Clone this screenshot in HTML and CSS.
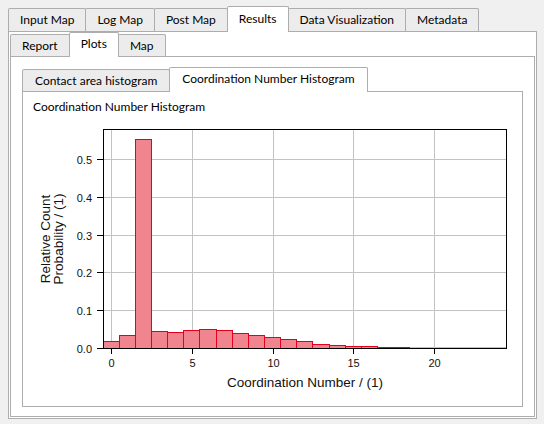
FILE: index.html
```html
<!DOCTYPE html>
<html lang="en">
<head>
  <meta charset="UTF-8">
  <title>Results - Plots</title>
  <link rel="stylesheet" href="styles.css">
</head>
<body>

<div class="tabwidget main">
  <div class="tabbar">
    <div class="tab">Input Map</div>
    <div class="tab">Log Map</div>
    <div class="tab">Post Map</div>
    <div class="tab active">Results</div>
    <div class="tab">Data Visualization</div>
    <div class="tab">Metadata</div>
  </div>
  <div class="pane outer">

    <div class="tabwidget sub">
      <div class="tabbar">
        <div class="tab">Report</div>
        <div class="tab active">Plots</div>
        <div class="tab">Map</div>
      </div>
      <div class="pane middle">

        <div class="tabwidget plots">
          <div class="tabbar">
            <div class="tab">Contact area histogram</div>
            <div class="tab active">Coordination Number Histogram</div>
          </div>
          <div class="pane inner">
            <div class="plot-title">Coordination Number Histogram</div>
            <svg class="chart" width="500" height="286" viewBox="0 0 500 286">
              <!-- grid -->
              <g class="grid">
                <line x1="88.5" y1="13" x2="88.5" y2="231"/>
                <line x1="169.5" y1="13" x2="169.5" y2="231"/>
                <line x1="250.5" y1="13" x2="250.5" y2="231"/>
                <line x1="330.5" y1="13" x2="330.5" y2="231"/>
                <line x1="411.5" y1="13" x2="411.5" y2="231"/>
                <line x1="80" y1="193.5" x2="484" y2="193.5"/>
                <line x1="80" y1="155.5" x2="484" y2="155.5"/>
                <line x1="80" y1="118.5" x2="484" y2="118.5"/>
                <line x1="80" y1="80.5" x2="484" y2="80.5"/>
                <line x1="80" y1="42.5" x2="484" y2="42.5"/>
              </g>
              <!-- bars -->
              <g class="bars">
                <rect x="80.5" y="224.5" width="16" height="7"/>
                <rect x="96.5" y="218.5" width="16" height="13"/>
                <rect x="112.5" y="22.5" width="16" height="209"/>
                <rect x="128.5" y="214.5" width="16" height="17"/>
                <rect x="144.5" y="215.5" width="16" height="16"/>
                <rect x="160.5" y="213.5" width="16" height="18"/>
                <rect x="176.5" y="212.5" width="17" height="19"/>
                <rect x="193.5" y="213.5" width="16" height="18"/>
                <rect x="209.5" y="216.5" width="16" height="15"/>
                <rect x="225.5" y="218.5" width="16" height="13"/>
                <rect x="241.5" y="220.5" width="16" height="11"/>
                <rect x="257.5" y="222.5" width="16" height="9"/>
                <rect x="273.5" y="224.5" width="16" height="7"/>
                <rect x="289.5" y="227.5" width="17" height="4"/>
                <rect x="306.5" y="228.5" width="16" height="3"/>
                <rect x="322.5" y="229.5" width="16" height="2"/>
                <rect x="338.5" y="229.5" width="16" height="2"/>
                <rect x="354.5" y="230.5" width="16" height="1"/>
                <rect x="370.5" y="230.5" width="16" height="1"/>
              </g>
              <line class="tail" x1="387" y1="230.5" x2="484" y2="230.5"/>
              <!-- axes -->
              <rect class="frame" x="80.5" y="12.5" width="403" height="219"/>
              <g class="ticks">
                <line x1="74" y1="231.5" x2="80" y2="231.5"/>
                <line x1="74" y1="193.5" x2="80" y2="193.5"/>
                <line x1="74" y1="155.5" x2="80" y2="155.5"/>
                <line x1="74" y1="118.5" x2="80" y2="118.5"/>
                <line x1="74" y1="80.5" x2="80" y2="80.5"/>
                <line x1="74" y1="42.5" x2="80" y2="42.5"/>
                <line x1="88.5" y1="232" x2="88.5" y2="237"/>
                <line x1="169.5" y1="232" x2="169.5" y2="237"/>
                <line x1="250.5" y1="232" x2="250.5" y2="237"/>
                <line x1="330.5" y1="232" x2="330.5" y2="237"/>
                <line x1="411.5" y1="232" x2="411.5" y2="237"/>
              </g>
              <g class="ylabels">
                <text x="69" y="235.5">0.0</text>
                <text x="69" y="197.5">0.1</text>
                <text x="69" y="159.5">0.2</text>
                <text x="69" y="122.5">0.3</text>
                <text x="69" y="84.5">0.4</text>
                <text x="69" y="46.5">0.5</text>
              </g>
              <g class="xlabels">
                <text x="88.5" y="250">0</text>
                <text x="169.5" y="250">5</text>
                <text x="250.5" y="250">10</text>
                <text x="330.5" y="250">15</text>
                <text x="411.5" y="250">20</text>
              </g>
              <text class="axis-title" x="282" y="270">Coordination Number / (1)</text>
              <text class="axis-title" transform="translate(27,122) rotate(-90)">Relative Count</text>
              <text class="axis-title" transform="translate(40,122) rotate(-90)">Probability / (1)</text>
            </svg>
          </div>
        </div>

      </div>
    </div>

  </div>
</div>

</body>
</html>
```

FILE: styles.css
```css
* {
  box-sizing: border-box;
  margin: 0;
  padding: 0;
}
html, body {
  height: 100%;
}
body {
  font-family: Lato, "Noto Sans", sans-serif;
  font-size: 12px;
  color: #000;
  background: #f0f0f0;
  padding: 6px 7px 5px 8px;
  display: flex;
  flex-direction: column;
}
.tabwidget {
  display: flex;
  flex-direction: column;
  flex: 1;
}
.tabbar {
  display: flex;
  align-items: flex-end;
  position: relative;
  z-index: 1;
}
.tab {
  height: 23px;
  line-height: 21px;
  padding: 0 11px;
  background: #ececec;
  border: 1px solid #adadad;
  border-bottom: none;
  margin-right: -1px;
  border-radius: 2px 2px 0 0;
  white-space: nowrap;
}
.tab.active {
  height: 26px;
  line-height: 23px;
  margin-bottom: -1px;
  background: #fff;
  position: relative;
}
.pane {
  flex: 1;
  display: flex;
  flex-direction: column;
  background: #fff;
  border: 1px solid #adadad;
}
.outer {
  padding: 0 1px 1px 1px;
}
.sub .tab {
  height: 22px;
  line-height: 21px;
}
.sub .tab.active {
  height: 25px;
  line-height: 22px;
}
.middle {
  padding: 10px 11px 9px 11px;
}
.plots .tab {
  padding: 0 12px;
}
.inner {
  padding: 0;
}
.plot-title {
  padding: 7px 10px 0;
  height: 25px;
  line-height: 16px;
}
.chart {
  display: block;
  font-family: "Liberation Sans", Arial, sans-serif;
}
.grid line {
  stroke: #c3c3c3;
  stroke-width: 1;
}
.bars rect {
  fill: #f0848f;
  stroke: #e5001c;
  stroke-width: 1;
}
.tail {
  stroke: #f5a9b0;
  stroke-width: 1;
}
.frame {
  fill: none;
  stroke: #000;
  stroke-width: 1;
}
.ticks line {
  stroke: #000;
  stroke-width: 1;
}
.ylabels text {
  font-size: 11px;
  text-anchor: end;
  fill: #111;
}
.xlabels text {
  font-size: 11px;
  text-anchor: middle;
  fill: #111;
}
.axis-title {
  font-size: 13.5px;
  text-anchor: middle;
  fill: #111;
}
```
